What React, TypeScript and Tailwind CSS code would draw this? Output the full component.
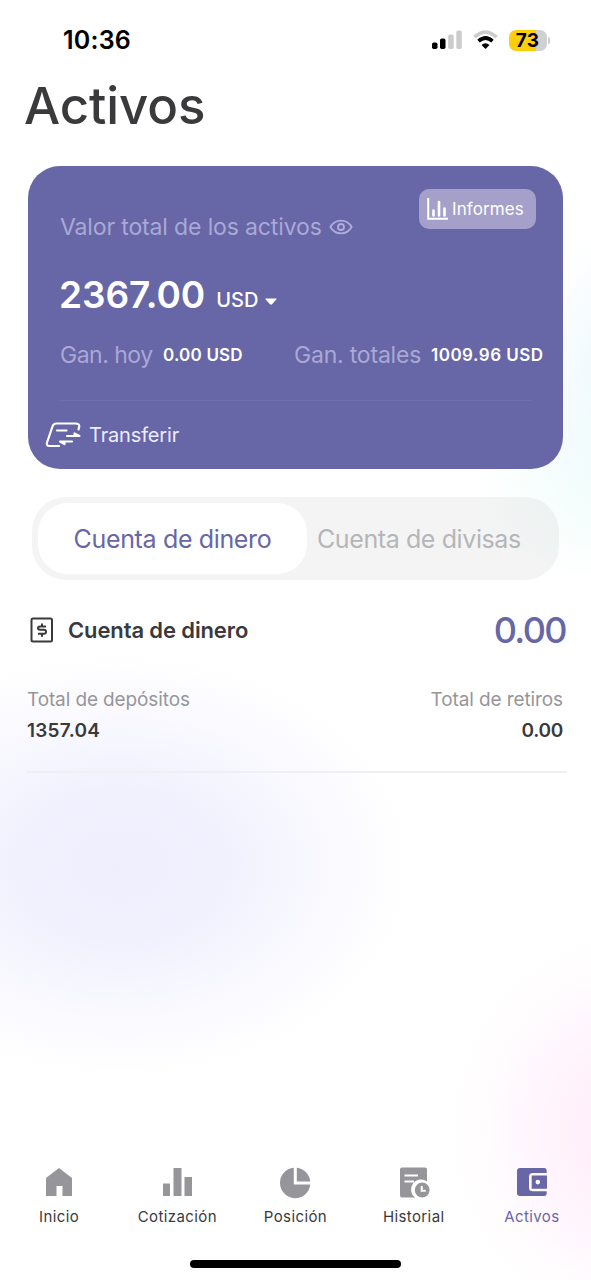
import type { ReactNode } from 'react'

interface Tab {
  label: string
  icon: ReactNode
  active?: boolean
}

const tabs: Tab[] = [
  {
    label: 'Inicio',
    icon: <path d="M17 2 30 12V30H20.500V20H14.500V30H4V12Z" />,
  },
  {
    label: 'Cotización',
    icon: <path d="M3 17.500H10V30H3ZM13.500 2H21.500V30H13.500ZM24.500 11H32V30H24.500Z" />,
  },
  {
    label: 'Posición',
    icon: (
      <path d="M15.800 1.800V18.500H32.300A15.200 15.200 0 1 1 15.800 1.800ZM18.800 1.800A15.200 15.200 0 0 1 32.300 15.500H18.800Z" />
    ),
  },
  {
    label: 'Historial',
    icon: (
      <>
        <path d="M5 1.500H28Q30 1.500 30 3.500V15.500A8.800 8.800 0 0 0 18 31.500H5Q3 31.500 3 29.500V3.500Q3 1.500 5 1.500Z" />
        <path d="M7.500 9.500H21M7.500 15.500H17" stroke="#fff" strokeWidth="2" />
        <circle cx="25.200" cy="24" r="9" fill="#fff" />
        <circle cx="25.200" cy="24" r="7.400" />
        <path d="M24.700 20V24.700H28.700" fill="none" stroke="#fff" strokeWidth="2" />
      </>
    ),
  },
  {
    label: 'Activos',
    active: true,
    icon: (
      <>
        <path d="M5 2H29Q31.700 2 31.700 5V7H18Q14 7 14 10.500V21.700Q14 25.300 18 25.300H31.700V27Q31.700 30 29 30H5Q2 30 2 27V5Q2 2 5 2Z" />
        <path
          fillRule="evenodd"
          d="M16.700 9.500H32V22.700H16.700ZM22.800 13.800A2.300 2.300 0 1 0 22.800 18.400A2.300 2.300 0 1 0 22.800 13.800Z"
        />
      </>
    ),
  },
]

function StatusBar() {
  return (
    <div className="flex h-20 items-center justify-between pr-[41px] pl-[63px]">
      <span className="mt-[2px] text-[25px] font-semibold tracking-[0.2px] text-black">10:36</span>
      <div className="flex items-center">
        <svg className="h-5 w-[30px]" viewBox="0 0 30 20">
          <rect x="0" y="12.500" width="5.500" height="6.500" rx="1.800" />
          <rect x="8" y="8.500" width="5.500" height="10.500" rx="1.800" />
          <rect x="16.200" y="4.500" width="5.500" height="14.500" rx="1.800" fill="#ccc" />
          <rect x="24.300" y="0.500" width="5.500" height="18.500" rx="1.800" fill="#ccc" />
        </svg>
        <svg className="ml-[11px] h-5 w-[25px]" viewBox="0 0 25 20" fill="none" strokeWidth="3.600">
          <path d="M1.400 7.200Q12.500 -3 23.600 7.200" stroke="#ccc" />
          <path d="M5.500 11.200Q12.500 4.800 19.500 11.200" stroke="#000" />
          <path d="M8.500 15Q12.500 11.500 16.500 15L12.500 19Z" fill="#000" />
        </svg>
        <div className="ml-[11px] flex h-[21px] w-[38px] items-center justify-center rounded-[7px] bg-linear-to-r from-[#fdce0a] from-72% to-[#d0d0d0] to-72% text-[19px] leading-none font-bold tracking-[0.2px] text-black">
          73
        </div>
        <div className="ml-[1.500px] h-[7px] w-[2px] rounded-r-full bg-[#ccc]" />
      </div>
    </div>
  )
}

function AssetsCard() {
  return (
    <section className="mx-7 mt-[35px] flex h-[303px] flex-col rounded-[32px] bg-[#6766a6] text-white">
      <div className="flex h-[97px] pl-8">
        <div className="mt-[45px] flex h-8 items-center">
          <span className="w-[262px] text-[23px] tracking-[-0.14px] whitespace-nowrap text-[#aaa8d6]">
            Valor total de los activos
          </span>
          <svg
            className="ml-[7px] h-4 w-6"
            viewBox="0 0 24 16"
            fill="none"
            stroke="#b0aedc"
            strokeWidth="1.800"
          >
            <path d="M1.300 8C6.500 -0.500 17.500 -0.500 22.700 8C17.500 16.500 6.500 16.500 1.300 8Z" />
            <circle cx="12" cy="8" r="3" />
          </svg>
        </div>
        <button
          type="button"
          className="mt-[23px] mr-[27px] ml-auto flex h-10 w-[117px] items-center rounded-[10px] bg-[#a4a0ca] pl-2"
        >
          <svg className="h-[22px] w-[21px]" viewBox="0 0 21 22" fill="none" stroke="#fff">
            <path d="M1.200 0V20.700H21" strokeWidth="2" />
            <path d="M6.500 12.500V17.500M12 4V17.500M17.500 10.500V17.500" strokeWidth="2.600" strokeLinecap="round" />
          </svg>
          <span className="mt-[2px] ml-1 text-[17px] tracking-[0.1px]">Informes</span>
        </button>
      </div>

      <div className="flex h-[63px] items-center pl-[31px]">
        <span className="text-[37px] leading-none font-semibold tracking-[-0.05px]">2367.00</span>
        <span className="mt-[10px] ml-[11px] text-[20px] leading-none font-medium">USD</span>
        <svg className="mt-[14px] ml-[7px] h-[7px] w-3" viewBox="0 0 12 7" fill="#fff">
          <path d="M1 0.500H11Q12 0.500 11.300 1.400L7 6.300Q6 7.200 5 6.300L0.700 1.400Q0 0.500 1 0.500Z" />
        </svg>
      </div>

      <div className="flex h-[58px] items-center pl-8 whitespace-nowrap">
        <span className="w-[103px] text-[23px] tracking-[-0.5px] text-[#aaa8d6]">Gan. hoy</span>
        <span className="mt-px w-[131px] text-[17px] font-semibold tracking-[0.2px]">0.00 USD</span>
        <span className="w-[137px] text-[23px] tracking-[-0.2px] text-[#aaa8d6]">Gan. totales</span>
        <span className="mt-px text-[17px] font-semibold tracking-[0.5px]">1009.96 USD</span>
      </div>

      <div className="mx-[31px] mt-4 h-px shrink-0 bg-[#706fad]" />

      <div className="flex h-[68px] items-center pl-[17px]">
        <svg
          className="h-[26px] w-9"
          viewBox="0 0 36 26"
          fill="none"
          stroke="#fff"
          strokeWidth="2.200"
          strokeLinecap="round"
          strokeLinejoin="round"
        >
          <path d="M14 24H4.500Q1 24 2 20.500L7.500 4.500Q8.500 1.500 11.500 1.500H30.500Q34.500 1.500 34.300 4.500L33.500 7.500" />
          <path d="M12 8.500H21.500M22 14H34.500L29.500 11.500V14" />
          <path d="M27 19.500H15L19.500 22V19.500" />
        </svg>
        <span className="ml-2 text-[20px] tracking-[-0.15px] text-[#eeecff]">Transferir</span>
      </div>
    </section>
  )
}

function AccountSwitch() {
  return (
    <div className="mx-8 mt-7 flex h-[83px] rounded-[34px] bg-black/[0.045] p-[6px] pr-8 text-[25px] whitespace-nowrap">
      <button
        type="button"
        className="w-[269px] rounded-[30px] bg-white pt-[2px] tracking-[-0.35px] text-[#6766a6]"
      >
        Cuenta de dinero
      </button>
      <button type="button" className="ml-[10px] pt-[2px] tracking-[-0.4px] text-[#b5b6b8]">
        Cuenta de divisas
      </button>
    </div>
  )
}

function AccountDetail() {
  return (
    <section className="mx-[27px]">
      <div className="mt-[26px] flex h-12 items-center">
        <svg
          className="ml-[3px] h-[26px] w-6"
          viewBox="0 0 24 26"
          fill="none"
          stroke="#3a3a3c"
          strokeWidth="2"
        >
          <rect x="1.500" y="1.500" width="20.500" height="23" rx="1.500" />
          <path d="M16 9.500H10Q8 9.500 8 11T10 12.800H14Q16 12.800 16 14.800T14 16.700H8M12 6.500V9.500M12 16.700V19.700" />
        </svg>
        <h2 className="ml-[14px] text-[22px] font-semibold tracking-[-0.12px] text-[#3a3a3c]">
          Cuenta de dinero
        </h2>
        <span className="mr-[-2px] ml-auto text-[36px] font-medium tracking-[-1.600px] text-[#6766a6]">
          0.00
        </span>
      </div>

      <div className="mt-8 flex justify-between">
        <div>
          <p className="text-[19px] leading-[28px] tracking-[-0.12px] text-[#96969a]">
            Total de depósitos
          </p>
          <p className="mt-[3px] text-[19px] leading-[28px] font-semibold tracking-[0.25px] text-[#3a3a3c]">
            1357.04
          </p>
        </div>
        <div className="pr-px text-right">
          <p className="text-[19px] leading-[28px] tracking-[-0.1px] text-[#96969a]">Total de retiros</p>
          <p className="mt-[3px] text-[19px] leading-[28px] font-semibold tracking-[-0.3px] text-[#3a3a3c]">
            0.00
          </p>
        </div>
      </div>
      <div className="mr-[-3px] mt-[26px] h-[2px] bg-[#f0f0f4]" />
    </section>
  )
}

function BottomNav() {
  return (
    <nav className="mt-auto">
      <div className="grid h-[94px] grid-cols-5">
        {tabs.map(({ label, icon, active }) => (
          <button key={label} type="button" className="flex flex-col items-center">
            <svg
              className={active ? 'h-[34px] w-[34px] fill-[#6766a6]' : 'h-[34px] w-[34px] fill-[#96969a]'}
              viewBox="0 0 34 34"
            >
              {icon}
            </svg>
            <span
              className={`mt-[7px] text-[15px] leading-5 tracking-[0.4px] ${
                active ? 'text-[#6766a6]' : 'text-[#3a3a3c]'
              }`}
            >
              {label}
            </span>
          </button>
        ))}
      </div>
      <div className="mx-auto mb-3 h-2 w-[211px] rounded-full bg-black" />
    </nav>
  )
}

export default function App() {
  return (
    <main className="flex h-[1280px] w-[591px] flex-col overflow-hidden bg-white bg-[radial-gradient(ellipse_290px_210px_at_120px_865px,#eeeefd_0%,#f1f1fe_35%,#fbfbff_80%,transparent_100%),radial-gradient(ellipse_190px_200px_at_640px_1130px,#ffebf9_0%,#fff3fc_45%,#fffcfe_80%,transparent_100%),radial-gradient(ellipse_150px_110px_at_620px_480px,#f0fdfb_0%,transparent_100%),radial-gradient(ellipse_120px_170px_at_640px_390px,#e8f6fe_0%,transparent_100%)] font-['Inter',sans-serif]">
      <StatusBar />
      <h1 className="pl-6 text-[51px] leading-[51px] font-medium tracking-[-0.1px] text-[#3a3a3c]">
        Activos
      </h1>
      <AssetsCard />
      <AccountSwitch />
      <AccountDetail />
      <BottomNav />
    </main>
  )
}
